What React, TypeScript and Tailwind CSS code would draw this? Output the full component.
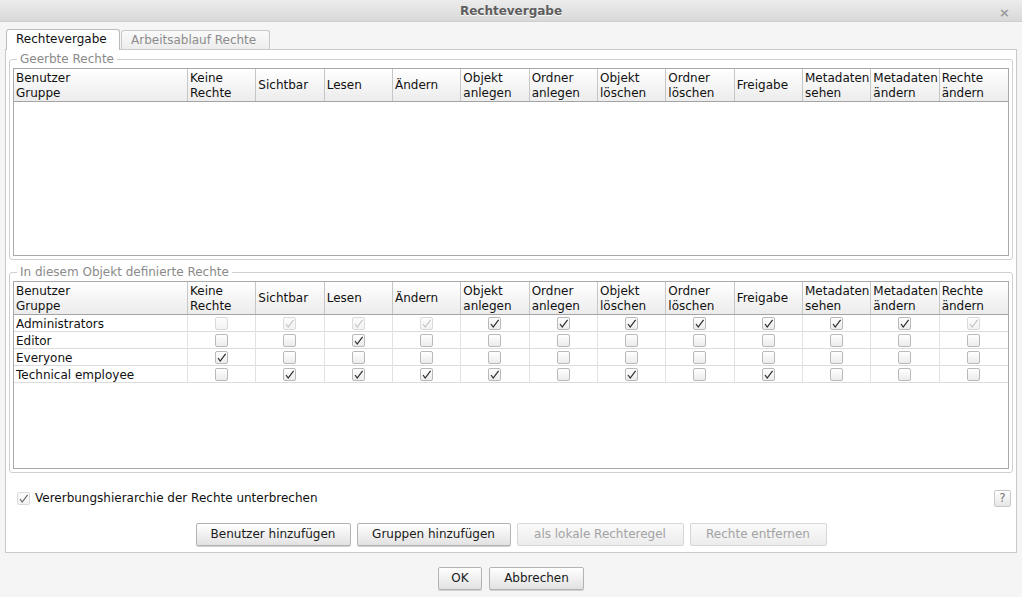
import React from "react";

const columns = [
  "Keine\nRechte",
  "Sichtbar",
  "Lesen",
  "Ändern",
  "Objekt\nanlegen",
  "Ordner\nanlegen",
  "Objekt\nlöschen",
  "Ordner\nlöschen",
  "Freigabe",
  "Metadaten\nsehen",
  "Metadaten\nändern",
  "Rechte\nändern",
];

// 0 = unchecked, 1 = checked, 2 = disabled unchecked, 3 = disabled checked
const rows: { name: string; perms: number[] }[] = [
  { name: "Administrators", perms: [2, 3, 3, 3, 1, 1, 1, 1, 1, 1, 1, 3] },
  { name: "Editor", perms: [0, 0, 1, 0, 0, 0, 0, 0, 0, 0, 0, 0] },
  { name: "Everyone", perms: [1, 0, 0, 0, 0, 0, 0, 0, 0, 0, 0, 0] },
  { name: "Technical employee", perms: [0, 1, 1, 1, 1, 0, 1, 0, 1, 0, 0, 0] },
];

const gridCols = "grid grid-cols-[174px_repeat(12,minmax(0,1fr))]";

function Check({ state, tick }: { state: number; tick?: string }) {
  const disabled = state >= 2;
  const checked = state === 1 || state === 3;
  return (
    <div
      className={
        "w-[13px] h-[13px] rounded-[2px] border flex items-center justify-center " +
        (disabled
          ? "border-[#dadada] bg-gradient-to-b from-[#fdfdfd] to-[#f2f2f2]"
          : "border-[#b9b9b9] bg-gradient-to-b from-white to-[#ececec]")
      }
    >
      {checked && (
        <svg width="11" height="11" viewBox="0 0 11 11">
          <path
            d="M2 6 L4.2 9 L9.6 1.8"
            fill="none"
            stroke={tick ?? (disabled ? "#c4c4c4" : "#2a2a2a")}
            strokeWidth="1.2"
          />
        </svg>
      )}
    </div>
  );
}

function HeaderRow() {
  return (
    <div className={gridCols + " h-[33px] border-b border-[#a4a4a4] bg-gradient-to-b from-white to-[#ececec]"}>
      <div className="border-r border-[#c6c6c6] pl-[2px] pt-[1px] flex items-center leading-[15px] whitespace-pre">
        {"Benutzer\nGruppe"}
      </div>
      {columns.map((c) => (
        <div
          key={c}
          className="border-r border-[#c6c6c6] last:border-r-0 pl-[2px] pt-[1px] flex items-center leading-[15px] whitespace-pre overflow-hidden"
        >
          {c}
        </div>
      ))}
    </div>
  );
}

function RightsTable({ data }: { data: typeof rows }) {
  return (
    <div className="h-[188px] border border-[#a9a9a9] bg-white flex flex-col">
      <HeaderRow />
      {data.map((r) => (
        <div key={r.name} className={gridCols + " h-[17px] border-b border-[#dcdcdc]"}>
          <div className="border-r border-[#e2e2e2] pl-[2px] pt-[1px] leading-[16px] whitespace-nowrap">{r.name}</div>
          {r.perms.map((p, i) => (
            <div key={i} className="border-r border-[#e2e2e2] last:border-r-0 flex items-center justify-center">
              <Check state={p} />
            </div>
          ))}
        </div>
      ))}
    </div>
  );
}

function Group({ title, children }: { title: string; children: React.ReactNode }) {
  return (
    <fieldset className="mx-[3px] border border-[#cfcfcf] rounded-[3px] px-[3px] pt-[2px] pb-[3px]">
      <legend className="ml-[4px] px-[3px] text-[#8a8a8a] leading-[14px]">{title}</legend>
      {children}
    </fieldset>
  );
}

function Button({ label, disabled, className }: { label: string; disabled?: boolean; className?: string }) {
  return (
    <button
      className={
        "h-[23px] border rounded-[2px] leading-[21px] " +
        (disabled
          ? "border-[#d6d6d6] bg-gradient-to-b from-[#fafafa] to-[#ececec] text-[#a3a3a3] "
          : "border-[#b3b3b3] bg-gradient-to-b from-white to-[#e2e2e2] text-[#1a1a1a] shadow-[0_1px_0_#d0d0d0] ") +
        (className ?? "")
      }
    >
      {label}
    </button>
  );
}

export default function App() {
  return (
    <div
      className="w-[1022px] h-[597px] bg-[#f5f5f5] flex flex-col text-[12px] text-[#111] overflow-hidden"
      style={{ fontFamily: '"DejaVu Sans", Verdana, sans-serif' }}
    >
      {/* title bar */}
      <div className="h-[22px] shrink-0 bg-gradient-to-b from-[#ececec] to-[#d9d9d9] border-b border-[#cfcfcf] flex items-center relative">
        <div className="flex-1 text-center font-bold text-[#5e5e5e] [text-shadow:0_1px_0_#fff]">Rechtevergabe</div>
        <div className="absolute right-[12px] top-[3px] text-[#9a9a9a] font-bold text-[13px]">×</div>
      </div>

      <div className="px-[5px] pt-[6px]">
        {/* tabs */}
        <div className="flex items-end h-[21px] pl-[1px] relative z-10">
          <div className="h-[21px] w-[114px] border border-b-0 border-[#bcbcbc] rounded-t-[3px] bg-white pl-[9px] leading-[19px] mb-[-1px] pb-[1px]">
            Rechtevergabe
          </div>
          <div className="h-[19px] w-[149px] ml-[1px] border border-b-0 border-[#c8c8c8] rounded-t-[3px] bg-gradient-to-b from-[#fafafa] to-[#ededed] pl-[9px] leading-[18px] text-[#8c8c8c]">
            Arbeitsablauf Rechte
          </div>
        </div>

        {/* panel */}
        <div className="h-[504px] border border-[#c9c9c9] bg-white pt-[2px] flex flex-col">
          <Group title="Geerbte Rechte">
            <RightsTable data={[]} />
          </Group>
          <div className="h-[5px]" />
          <Group title="In diesem Objekt definierte Rechte">
            <RightsTable data={rows} />
          </Group>

          <div className="mt-[16px] h-[18px] flex items-center pl-[11px] pr-[5px]">
            <Check state={3} tick="#6a6a6a" />
            <span className="ml-[5px]">Vererbungshierarchie der Rechte unterbrechen</span>
            <div className="ml-auto w-[17px] h-[17px] border border-[#c9c9c9] rounded-[2px] bg-gradient-to-b from-white to-[#e6e6e6] text-[#777] text-[12px] leading-[15px] text-center">
              ?
            </div>
          </div>

          <div className="mt-[16px] flex justify-center gap-[6px]">
            <Button label="Benutzer hinzufügen" className="w-[155px]" />
            <Button label="Gruppen hinzufügen" className="w-[154px]" />
            <Button label="als lokale Rechteregel" disabled className="w-[167px]" />
            <Button label="Rechte entfernen" disabled className="w-[137px]" />
          </div>
        </div>
      </div>

      <div className="mt-[14px] flex justify-center gap-[7px]">
        <Button label="OK" className="w-[44px]" />
        <Button label="Abbrechen" className="w-[95px]" />
      </div>
    </div>
  );
}
